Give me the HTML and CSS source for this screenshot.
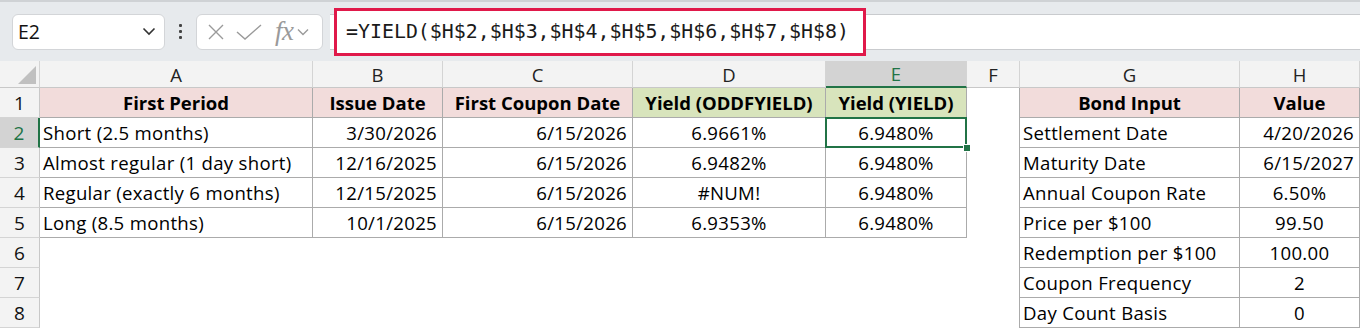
FILE: index.html
```html
<!DOCTYPE html>
<html>
<head>
<meta charset="utf-8">
<link rel="stylesheet" href="styles.css">
</head>
<body>
<div class="app">
  <div class="fbar">
    <div class="namebox">
      <span class="nb-text">E2</span>
      <svg class="chev" width="14" height="9" viewBox="0 0 14 9"><path d="M1.5 1.5 L7 7 L12.5 1.5" fill="none" stroke="#333" stroke-width="1.6"/></svg>
    </div>
    <div class="dots"><span></span><span></span><span></span></div>
    <div class="fxbox">
      <svg width="18" height="16" viewBox="0 0 18 16"><path d="M2 1 L16 15 M16 1 L2 15" stroke="#9a9a9a" stroke-width="1.4" fill="none"/></svg>
      <svg width="26" height="16" viewBox="0 0 26 16"><path d="M1 8 L9 15 L25 1" stroke="#9a9a9a" stroke-width="1.4" fill="none"/></svg>
      <span class="fx">fx</span>
      <svg width="12" height="8" viewBox="0 0 12 8"><path d="M1 1.5 L6 6.5 L11 1.5" fill="none" stroke="#9a9a9a" stroke-width="1.4"/></svg>
    </div>
    <div class="finput">
      <div class="formula">=YIELD($H$2,$H$3,$H$4,$H$5,$H$6,$H$7,$H$8)</div>
    </div>
  </div>
  <div class="sheet">
    <div class="corner"><span class="tri"></span></div>
    <div class="ch">A</div><div class="ch">B</div><div class="ch">C</div><div class="ch">D</div><div class="ch sel">E</div><div class="ch">F</div><div class="ch">G</div><div class="ch">H</div>

    <div class="rh">1</div>
    <div class="c b bl hp">First Period</div><div class="c b hp">Issue Date</div><div class="c b hp">First Coupon Date</div><div class="c b hg">Yield (ODDFYIELD)</div><div class="c b hg">Yield (YIELD)</div>
    <div class="c f"></div><div class="c b hp">Bond Input</div><div class="c b hp">Value</div>

    <div class="rh sel">2</div>
    <div class="c b bl l">Short (2.5 months)</div><div class="c b r">3/30/2026</div><div class="c b r">6/15/2026</div><div class="c b m">6.9661%</div><div class="c b m active">6.9480%<span class="handle"></span></div>
    <div class="c f"></div><div class="c b l">Settlement Date</div><div class="c b r">4/20/2026</div>

    <div class="rh">3</div>
    <div class="c b bl l">Almost regular (1 day short)</div><div class="c b r">12/16/2025</div><div class="c b r">6/15/2026</div><div class="c b m">6.9482%</div><div class="c b m">6.9480%</div>
    <div class="c f"></div><div class="c b l">Maturity Date</div><div class="c b r">6/15/2027</div>

    <div class="rh">4</div>
    <div class="c b bl l">Regular (exactly 6 months)</div><div class="c b r">12/15/2025</div><div class="c b r">6/15/2026</div><div class="c b m">#NUM!</div><div class="c b m">6.9480%</div>
    <div class="c f"></div><div class="c b l">Annual Coupon Rate</div><div class="c b m">6.50%</div>

    <div class="rh">5</div>
    <div class="c b bl l">Long (8.5 months)</div><div class="c b r">10/1/2025</div><div class="c b r">6/15/2026</div><div class="c b m">6.9353%</div><div class="c b m">6.9480%</div>
    <div class="c f"></div><div class="c b l">Price per $100</div><div class="c b m">99.50</div>

    <div class="rh">6</div>
    <div class="c"></div><div class="c"></div><div class="c"></div><div class="c"></div><div class="c"></div>
    <div class="c f"></div><div class="c b l">Redemption per $100</div><div class="c b m">100.00</div>

    <div class="rh">7</div>
    <div class="c"></div><div class="c"></div><div class="c"></div><div class="c"></div><div class="c"></div>
    <div class="c f"></div><div class="c b l">Coupon Frequency</div><div class="c b m">2</div>

    <div class="rh">8</div>
    <div class="c"></div><div class="c"></div><div class="c"></div><div class="c"></div><div class="c"></div>
    <div class="c f"></div><div class="c b l">Day Count Basis</div><div class="c b m">0</div>
  </div>
</div>
</body>
</html>
```
FILE: styles.css
```css
* { box-sizing: border-box; }
html, body { margin: 0; padding: 0; }
body { width: 1360px; height: 328px; overflow: hidden; background: #fff; font-family: "Open Sans", "Liberation Sans", sans-serif; color: #000; }

.app { display: flex; flex-direction: column; width: 1360px; }

.fbar {
  height: 61px;
  background: #e7eaed;
  border-top: 2px solid #cfd2d5;
  display: flex;
  align-items: center;
  padding-left: 12px;
  position: relative;
}
.namebox {
  width: 153px; height: 36px;
  background: #fff;
  border: 1px solid #d3d5d8;
  border-radius: 6px;
  display: flex; align-items: center; justify-content: space-between;
  padding: 0 8px 0 5px;
}
.nb-text { font-family: "Open Sans", sans-serif; font-size: 19.5px; color: #111; }
.dots { width: 31px; display: flex; flex-direction: column; align-items: center; gap: 3px; }
.dots span { width: 3px; height: 3px; background: #444; border-radius: 1px; display: block; }
.fxbox {
  width: 127px; height: 36px;
  background: #fff;
  border: 1px solid #d3d5d8;
  border-radius: 6px;
  display: flex; align-items: center;
  padding: 0 4px 0 10px;
  gap: 11px;
}
.fx { font-family: "Liberation Serif", serif; font-style: italic; font-size: 27px; color: #9a9a9a; margin-left: 2px; margin-right: -8px; letter-spacing: -0.5px; line-height: 1; }
.finput {
  margin-left: 7px;
  flex: 1;
  height: 36px;
  background: #fff;
  border-top: 1px solid #c9cbce;
  border-bottom: 1px solid #c9cbce;
  position: relative;
}
.formula {
  position: absolute;
  left: 4px; top: -7px;
  width: 532px; height: 48px;
  border: 3px solid #e0194a;
  font-family: "DejaVu Sans Mono", "Liberation Mono", monospace;
  font-size: 19.9px;
  color: #1a1a1a;
  padding: 9px 0 0 9px;
  white-space: nowrap;
  background: #fff;
}

.sheet {
  display: grid;
  grid-template-columns: 40px 273px 130px 190px 193px 141px 53px 220px 120px;
  grid-template-rows: 27px repeat(8, 30px);
  font-size: 18.6px;
  letter-spacing: 0.3px;
}
.corner { background: #f3f3f3; border-right: 1px solid #d4d4d4; border-bottom: 1px solid #c8c8c8; position: relative; }
.tri { position: absolute; right: 3px; bottom: 3px; width: 0; height: 0; border-left: 18px solid transparent; border-bottom: 18px solid #c0c0c0; }
.ch {
  background: #f3f3f3;
  border-right: 1px solid #d4d4d4;
  border-bottom: 1px solid #c8c8c8;
  display: flex; align-items: center; justify-content: center;
  font-size: 18.5px; color: #222; letter-spacing: 0;
}
.ch.sel { background: #d3d3d3; color: #217346; border-bottom: 2px solid #217346; }
.rh {
  background: #f3f3f3;
  border-right: 1px solid #c8c8c8;
  border-bottom: 1px solid #d4d4d4;
  display: flex; align-items: center; justify-content: center;
  font-size: 19px; color: #111; letter-spacing: 0;
}
.rh.sel { background: #d3d3d3; color: #217346; border-right: 2px solid #217346; }
.c {
  display: flex; align-items: center;
  white-space: nowrap;
  background: #fff;
}
.c.b { border-right: 1px solid #ababab; border-bottom: 1px solid #ababab; }
.c.f { border-right: 1px solid #ababab; }
.c.l { justify-content: flex-start; padding-left: 3px; }
.c.r { justify-content: flex-end; padding-right: 5px; }
.c.m { justify-content: center; }
.hp { background: #f2dcdb; font-weight: bold; justify-content: center; letter-spacing: 0; font-size: 18.5px; }
.hg { background: #d8e4bc; font-weight: bold; justify-content: center; letter-spacing: 0; font-size: 18.5px; }
.active { position: relative; }
.active::after {
  content: ""; position: absolute;
  left: -1px; top: -1px; right: -1px; bottom: -1px;
  border: 2px solid #217346;
}
.handle {
  position: absolute; right: -5px; bottom: -5px;
  width: 8px; height: 8px; background: #217346; border: 1px solid #fff; z-index: 2;
}
```
